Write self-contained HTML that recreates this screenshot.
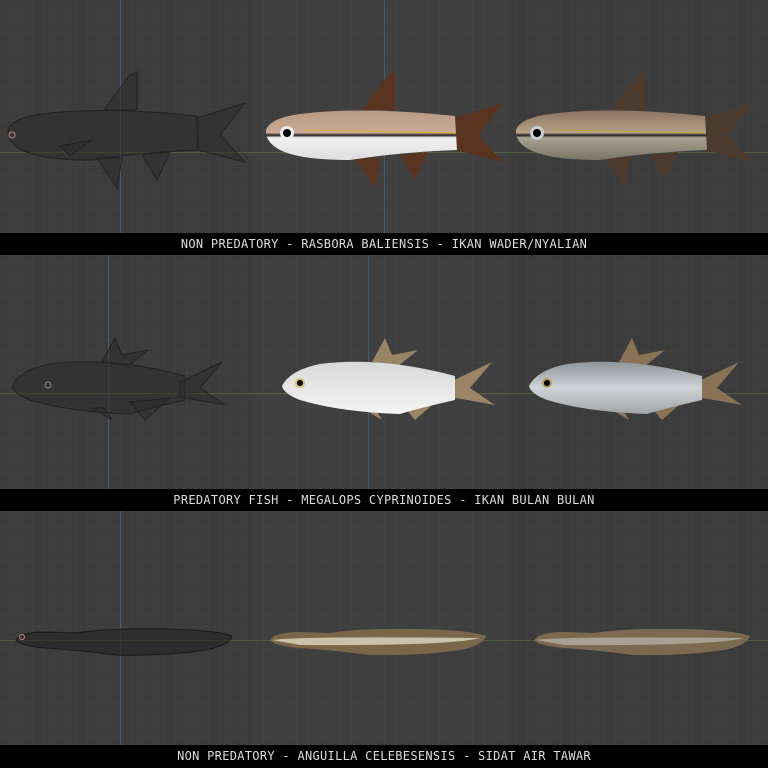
<!DOCTYPE html><html><head><style>
html,body{margin:0;padding:0;background:#3c3c3c;}
.bar{position:absolute;left:0;width:768px;height:22px;background:#000;color:#ddd;font:12px "DejaVu Sans Mono","Liberation Mono",monospace;text-align:center;line-height:22px;letter-spacing:0.3px}
</style></head><body>
<div style="position:relative;width:768px;height:768px;overflow:hidden">
<svg width="768" height="768" style="position:absolute;left:0;top:0">
<defs>
<pattern id="g" width="11" height="11" patternUnits="userSpaceOnUse"><path d="M11 0V11H0" fill="none" stroke="#444" stroke-width="1"/></pattern>
<linearGradient id="rb" x1="0" y1="0" x2="0" y2="1"><stop offset="0" stop-color="#b89a84"/><stop offset="0.45" stop-color="#c9aa94"/><stop offset="0.5" stop-color="#222"/><stop offset="0.55" stop-color="#f2f2f2"/><stop offset="1" stop-color="#ddd"/></linearGradient>
<linearGradient id="rb2" x1="0" y1="0" x2="0" y2="1"><stop offset="0" stop-color="#8a7462"/><stop offset="0.45" stop-color="#b7a088"/><stop offset="0.5" stop-color="#222"/><stop offset="0.55" stop-color="#a8a08f"/><stop offset="1" stop-color="#7a7466"/></linearGradient>
<linearGradient id="mg" x1="0" y1="0" x2="0" y2="1"><stop offset="0" stop-color="#d8d8d8"/><stop offset="1" stop-color="#f4f4f4"/></linearGradient>
<linearGradient id="mg2" x1="0" y1="0" x2="0" y2="1"><stop offset="0" stop-color="#8f9499"/><stop offset="0.5" stop-color="#d0d4d8"/><stop offset="1" stop-color="#a0a4a6"/></linearGradient>
<g id="rfins">
<path d="M362 110 L388 75 L395 72 L395 110Z"/>
<path d="M455 118 L503 103 L478 135 L503 162 L455 150Z"/>
<path d="M355 158 L375 188 L380 158Z"/>
<path d="M400 155 L428 152 L415 180Z"/>
<path d="M318 146 L350 140 L328 156Z"/>
</g>
<path id="rbody" d="M266 130 Q270 118 300 114 Q360 106 455 116 L457 150 Q400 152 350 160 Q300 160 280 150 Q265 142 266 130Z"/>
<g id="mfins">
<path d="M372 362 L385 338 L392 355 L418 350 L398 366Z"/>
<path d="M450 382 L492 362 L470 388 L495 405 L450 397Z"/>
<path d="M400 402 L440 398 L415 420Z"/>
<path d="M362 408 L382 420 L375 408Z"/>
</g>
<path id="mbody" d="M282 386 Q290 370 320 364 Q380 356 455 376 L455 400 Q420 408 400 414 Q340 412 300 400 Q284 394 282 386Z"/>
<path id="eel" d="M270 640 Q275 632 300 632 L330 633 Q360 628 420 629 Q470 630 486 636 Q484 645 460 650 Q420 656 370 655 Q330 650 300 648 Q275 646 270 640Z"/>
</defs>
<rect width="768" height="768" fill="#3c3c3c"/>
<rect width="768" height="768" fill="url(#g)"/>
<rect x="255" width="256" height="768" fill="#fff" opacity="0.02"/>
<g stroke-width="1">
<line x1="120.5" y1="0" x2="120.5" y2="233" stroke="#3f5a7a"/>
<line x1="384.5" y1="0" x2="384.5" y2="233" stroke="#3f5a7a"/>
<line x1="0" y1="152.5" x2="768" y2="152.5" stroke="#4f5f3c"/>
<line x1="108.5" y1="255" x2="108.5" y2="489" stroke="#3f5a7a"/>
<line x1="368.5" y1="255" x2="368.5" y2="489" stroke="#3f5a7a"/>
<line x1="0" y1="393.5" x2="768" y2="393.5" stroke="#4f5f3c"/>
<line x1="120.5" y1="511" x2="120.5" y2="745" stroke="#3f5a7a"/>
<line x1="0" y1="640.5" x2="768" y2="640.5" stroke="#4f5f3c"/>
</g>
<g transform="translate(-258,0)" fill="rgba(40,40,40,0.45)" stroke="#222" stroke-width="1">
<use href="#rbody"/><use href="#rfins"/>
</g>
<circle cx="12" cy="135" r="3" fill="none" stroke="#c88"/>
<use href="#rfins" fill="#5a3420"/>
<use href="#rbody" fill="url(#rb)"/>
<circle cx="287" cy="133" r="7" fill="#eee"/><circle cx="287" cy="133" r="4" fill="#000"/>
<line x1="305" y1="130" x2="455" y2="133" stroke="#d8b030" stroke-width="1"/>
<g transform="translate(250,0)">
<use href="#rfins" fill="#4c3a2c"/>
<use href="#rbody" fill="url(#rb2)"/>
<circle cx="287" cy="133" r="7" fill="#ccc"/><circle cx="287" cy="133" r="4" fill="#000"/>
<line x1="305" y1="130" x2="455" y2="133" stroke="#c8a030" stroke-width="1"/>
</g>
<g transform="translate(-270,0)" fill="rgba(40,40,40,0.45)" stroke="#222">
<use href="#mfins"/><use href="#mbody"/>
</g>
<circle cx="48" cy="385" r="3" fill="none" stroke="#888"/>
<use href="#mfins" fill="#9a8466"/>
<use href="#mbody" fill="url(#mg)"/>
<circle cx="300" cy="383" r="5" fill="#d8c070"/><circle cx="300" cy="383" r="3" fill="#000"/>
<g transform="translate(247,0)">
<use href="#mfins" fill="#8a7256"/>
<use href="#mbody" fill="url(#mg2)"/>
<circle cx="300" cy="383" r="5" fill="#b8a060"/><circle cx="300" cy="383" r="3" fill="#000"/>
</g>
<g transform="translate(-254,0)"><use href="#eel" fill="rgba(35,35,35,0.6)" stroke="#1a1a1a"/></g>
<circle cx="22" cy="637" r="2.5" fill="none" stroke="#c88"/>
<use href="#eel" fill="#7a6648"/>
<path d="M272 640 Q300 636 480 638 Q450 646 300 645Z" fill="#ccc2a8"/>
<g transform="translate(264,0)">
<use href="#eel" fill="#7c6a50"/>
<path d="M272 640 Q300 636 480 638 Q450 646 300 645Z" fill="#a8a090"/>
</g>
</svg>
<div class="bar" style="top:233px">NON PREDATORY - RASBORA BALIENSIS - IKAN WADER/NYALIAN</div>
<div class="bar" style="top:489px">PREDATORY FISH - MEGALOPS CYPRINOIDES - IKAN BULAN BULAN</div>
<div class="bar" style="top:745px;height:23px">NON PREDATORY - ANGUILLA CELEBESENSIS - SIDAT AIR TAWAR</div>
</div>
</body></html>
